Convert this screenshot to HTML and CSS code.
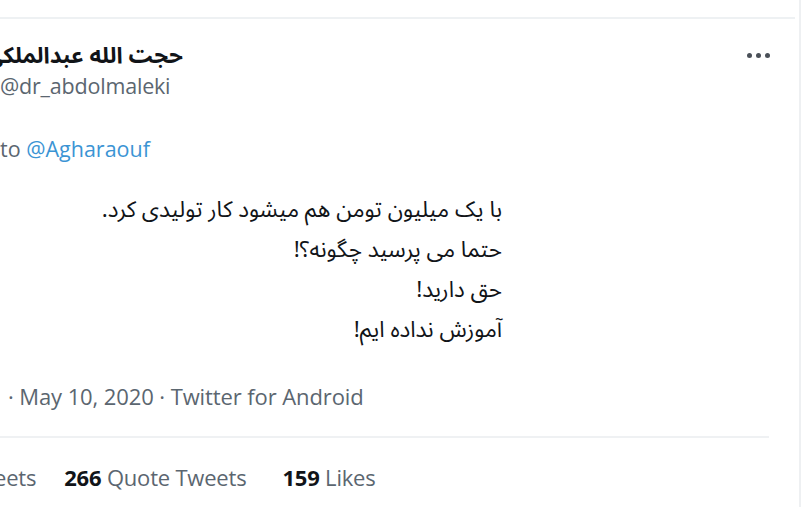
FILE: index.html
```html
<!DOCTYPE html>
<html lang="en">
<head>
<meta charset="utf-8">
<link rel="stylesheet" href="styles.css">
</head>
<body>
<div class="page">
  <div class="card">
    <div class="header">
      <div class="user">
        <div class="name" dir="rtl">حجت الله عبدالملکی</div>
        <div class="handle">@dr_abdolmaleki</div>
      </div>
      <div class="more"><span></span><span></span><span></span></div>
    </div>
    <div class="reply">to <span class="link">@Agharaouf</span></div>
    <div class="text" dir="rtl">
      <p>با یک میلیون تومن هم میشود کار تولیدی کرد.</p>
      <p>حتما می پرسید چگونه؟!</p>
      <p>حق دارید!</p>
      <p>آموزش نداده ایم!</p>
    </div>
    <div class="meta">· May 10, 2020 · Twitter for Android</div>
    <div class="stats">
      <span class="stat rt">eets</span>
      <span class="stat qt"><b>266</b> Quote Tweets</span>
      <span class="stat"><b>159</b> Likes</span>
    </div>
  </div>
</div>
</body>
</html>
```
FILE: styles.css
```css
html, body {
  margin: 0;
  padding: 0;
  background: #ffffff;
}
body {
  width: 804px;
  height: 507px;
  overflow: hidden;
  font-family: "Open Sans", "DejaVu Sans", sans-serif;
}
.page {
  width: 799px;
  height: 507px;
  border-right: 2px solid #eef0f2;
  box-sizing: content-box;
  padding-top: 17px;
}
.card {
  border-top: 2px solid #eef1f3;
  width: 795px;
  height: 490px;
}
.header {
  display: flex;
  justify-content: space-between;
  align-items: flex-start;
  padding-top: 22px;
}
.user {
  display: flex;
  flex-direction: column;
}
.name {
  width: 183px;
  text-align: right;
  white-space: nowrap;
  font-family: "Noto Sans Arabic", "DejaVu Sans Condensed", "DejaVu Sans", sans-serif;
  font-weight: bold;
  font-size: 22.5px;
  line-height: 30px;
  color: #111418;
}
.handle {
  font-size: 21.5px;
  line-height: 30px;
  color: #5b6670;
  letter-spacing: -0.2px;
}
.more {
  display: flex;
  gap: 4px;
  margin-top: 12px;
  margin-right: 25px;
}
.more span {
  width: 5px;
  height: 5px;
  border-radius: 50%;
  background: #4a5058;
}
.reply {
  margin-top: 33px;
  font-size: 21.5px;
  line-height: 30px;
  color: #5b6670;
}
.link {
  color: #3b94d4;
}
.text {
  width: 502px;
  margin-top: 26px;
  font-family: "Noto Sans Arabic", "DejaVu Sans Condensed", "DejaVu Sans", sans-serif;
  font-size: 22.5px;
  line-height: 40px;
  color: #111418;
}
.text p {
  margin: 0;
  white-space: nowrap;
}
.meta {
  margin-top: 31px;
  padding-left: 8px;
  font-size: 22px;
  line-height: 30px;
  color: #5b6670;
  letter-spacing: -0.1px;
}
.stats {
  border-top: 2px solid #eff1f3;
  width: 775px;
  margin-top: 25px;
  padding-top: 24px;
  margin-left: -6px;
  display: flex;
  font-size: 22px;
  line-height: 30px;
  color: #5b6670;
  letter-spacing: -0.2px;
}
.stats .rt {
  margin-right: 28px;
}
.stats .qt {
  margin-right: 36px;
}
.stats b {
  color: #111418;
  font-weight: 700;
}
```
